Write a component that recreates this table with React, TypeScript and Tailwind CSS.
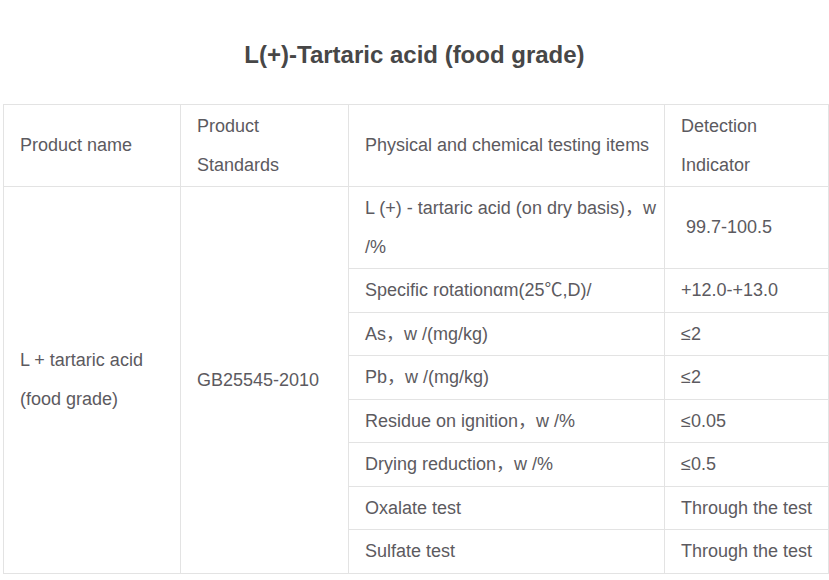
const rows: [string, string][] = [
  ['Specific rotationαm(25℃,D)/', '+12.0-+13.0'],
  ['As，w /(mg/kg)', '≤2'],
  ['Pb，w /(mg/kg)', '≤2'],
  ['Residue on ignition，w /%', '≤0.05'],
  ['Drying reduction，w /%', '≤0.5'],
  ['Oxalate test', 'Through the test'],
  ['Sulfate test', 'Through the test'],
];

const cell = 'border border-[#e3e3e3] pl-4 pr-1 py-[2px] align-middle text-left font-normal';

export default function App() {
  return (
    <div
      className="w-[829px] h-[580px] bg-white overflow-hidden"
      style={{ fontFamily: '"Liberation Sans", Arial, "Noto Sans CJK SC", sans-serif' }}
    >
      <h1 className="pt-[37px] pb-[31px] text-center text-[24px] leading-[36px] font-bold text-[#474747]">
        L(+)-Tartaric acid (food grade)
      </h1>
      <table className="ml-[3px] w-[825px] table-fixed border-collapse text-[18px] leading-[38.5px] text-[#5c5a60]">
        <colgroup>
          <col className="w-[177px]" />
          <col className="w-[168px]" />
          <col className="w-[316px]" />
          <col className="w-[164px]" />
        </colgroup>
        <thead>
          <tr>
            <th className={cell}>Product name</th>
            <th className={cell}>Product Standards</th>
            <th className={cell}>Physical and chemical testing items</th>
            <th className={cell}>Detection Indicator</th>
          </tr>
        </thead>
        <tbody>
          <tr>
            <td className={cell} rowSpan={8}>
              L + tartaric acid (food grade)
            </td>
            <td className={cell} rowSpan={8}>
              GB25545-2010
            </td>
            <td className={cell}>
              <span className="whitespace-nowrap">L (+) - tartaric acid (on dry basis)，w</span>
              <br />
              /%
            </td>
            <td className={cell}>&nbsp;99.7-100.5</td>
          </tr>
          {rows.map(([item, value]) => (
            <tr key={item}>
              <td className={`${cell} whitespace-nowrap`}>{item}</td>
              <td className={`${cell} whitespace-nowrap`}>{value}</td>
            </tr>
          ))}
        </tbody>
      </table>
    </div>
  );
}
